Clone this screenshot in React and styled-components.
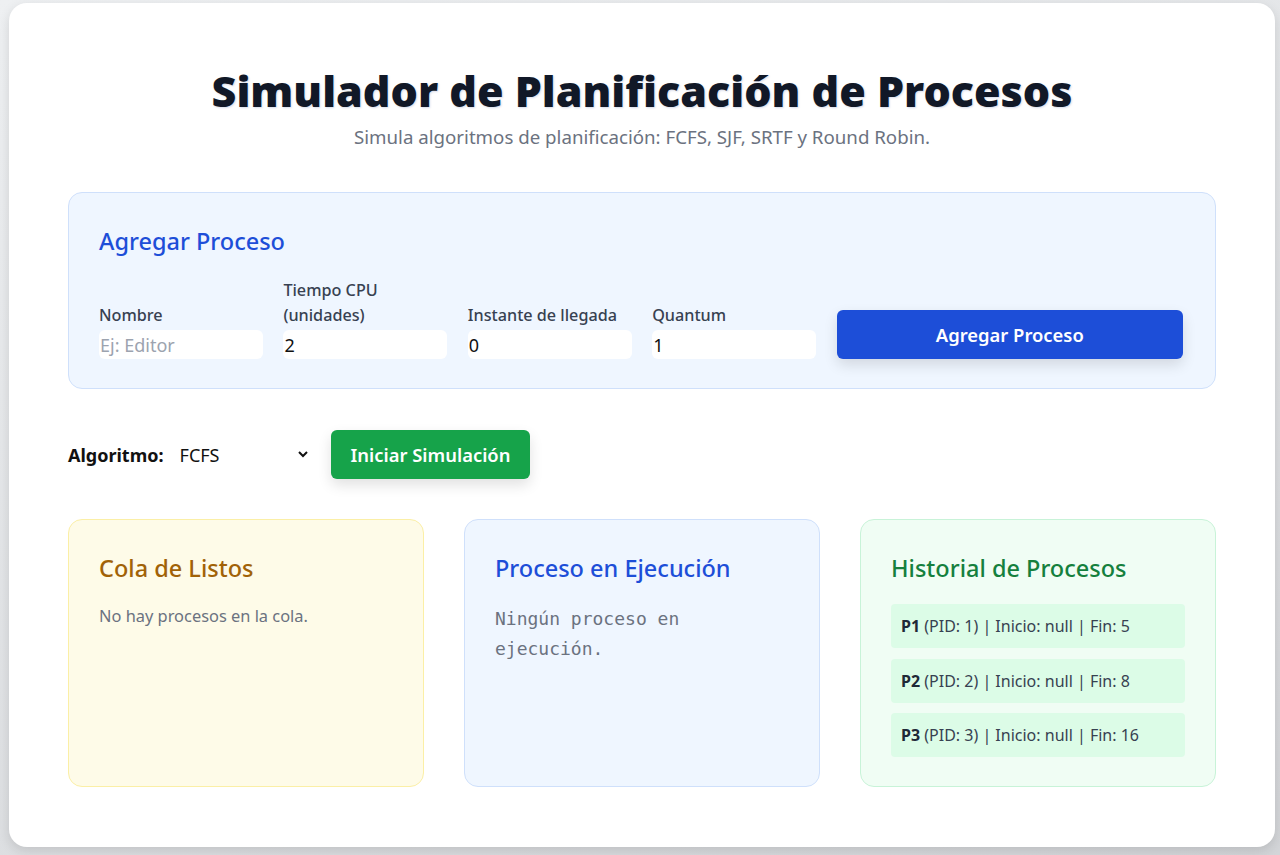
import React, { useState } from 'react';
import styled, { createGlobalStyle } from 'styled-components';

const GlobalStyle = createGlobalStyle`
  body {
    margin: 0;
    background: linear-gradient(160deg, #eef0f2 0%, #d3d5d8 100%);
    font-family: "Noto Sans", "Open Sans", "Liberation Sans", sans-serif;
    color: #111827;
  }
  * { box-sizing: border-box; }
`;

const tones = {
  blue: { bg: '#eff6ff', border: '#cfe0fb', title: '#1d4ed8' },
  yellow: { bg: '#fefbe8', border: '#fbefa6', title: '#a16207' },
  green: { bg: '#f0fdf4', border: '#c8f3d8', title: '#15803d' },
};

const Shell = styled.div`
  min-height: 855px;
  padding: 3px 5px 8px 9px;
`;

const Sheet = styled.main`
  background: #fff;
  border-radius: 18px;
  box-shadow: 0 4px 12px rgba(0, 0, 0, 0.12);
  padding: 62px 59px 60px;
`;

const Header = styled.header`
  text-align: center;
  margin-bottom: 43px;
`;

const Title = styled.h1`
  margin: 0;
  font-family: "Noto Sans", "Liberation Sans", sans-serif;
  font-weight: 900;
  font-size: 43px;
  line-height: 52px;
  color: #111827;
  text-shadow: 1px 1px 2px rgba(30, 58, 138, 0.18);
`;

const Subtitle = styled.p`
  margin: 8px 0 0;
  font-size: 18.7px;
  line-height: 24px;
  color: #6b7280;
`;

const Panel = styled.section`
  background: ${(p) => tones[p.$tone].bg};
  border: 1px solid ${(p) => tones[p.$tone].border};
  border-radius: 14px;
  padding: 32px 30px 29px;
  min-height: ${(p) => p.$minH || 'auto'};
`;

const PanelTitle = styled.h2`
  margin: 0 0 ${(p) => p.$gap || '20px'};
  font-size: 23.5px;
  font-weight: 500;
  line-height: 32px;
  color: ${(p) => tones[p.$tone].title};
`;

const FormGrid = styled.div`
  display: grid;
  grid-template-columns: repeat(4, 164px) 1fr;
  column-gap: 20.4px;
  align-items: end;
  margin-top: 21px;
`;

const Field = styled.label`
  display: flex;
  flex-direction: column;
  gap: 2px;
`;

const LabelText = styled.span`
  font-size: 16.2px;
  line-height: 25px;
  color: #374151;
  font-weight: 500;
`;

const Input = styled.input`
  height: 29px;
  width: 100%;
  border: none;
  border-radius: 6px;
  background: #fff;
  padding: 0 1px;
  font-family: "Noto Sans", "Liberation Sans", sans-serif;
  font-size: 18px;
  color: #111;
  outline: none;
  &::placeholder { color: #9ca3af; }
`;

const Button = styled.button`
  height: 49px;
  padding: 0 20px;
  border: none;
  border-radius: 6px;
  background: ${(p) => (p.$color === 'green' ? '#16a34a' : '#1d4ed8')};
  color: #fff;
  font-family: "Noto Sans", "Liberation Sans", sans-serif;
  font-size: 18.4px;
  font-weight: 600;
  cursor: pointer;
  box-shadow: 0 6px 14px rgba(0, 0, 0, 0.12);
  width: ${(p) => (p.$wide ? 'calc(100% - 2px)' : 'auto')};
`;

const Toolbar = styled.div`
  display: flex;
  align-items: center;
  gap: 20px;
  margin: 41px 0 40px;
`;

const AlgField = styled.label`
  display: flex;
  align-items: center;
  gap: 10px;
  font-size: 18px;
  font-weight: 700;
  color: #111;
`;

const Select = styled.select`
  width: 137px;
  height: 27px;
  border: none;
  border-radius: 6px;
  background: #fff;
  font-family: "Noto Sans", "Liberation Sans", sans-serif;
  font-size: 18px;
  color: #111;
  padding: 0 2px;
`;

const CardGrid = styled.div`
  display: grid;
  grid-template-columns: repeat(3, 1fr);
  gap: 40px;
`;

const Empty = styled.p`
  margin: 0;
  font-size: 16.4px;
  line-height: 24px;
  color: #6b7280;
`;

const MonoEmpty = styled.p`
  margin: 0;
  font-family: "DejaVu Sans Mono", "Liberation Mono", monospace;
  font-size: 18px;
  line-height: 30px;
  color: #6b7280;
`;

const HistoryList = styled.ul`
  list-style: none;
  margin: 0;
  padding: 0;
  display: flex;
  flex-direction: column;
  gap: 10.5px;
`;

const HistoryItem = styled.li`
  background: #dcfce7;
  border-radius: 4px;
  height: 44px;
  display: flex;
  align-items: center;
  padding: 0 10px;
  font-size: 16px;
  color: #374151;
  white-space: pre;
  b { color: #1f2937; font-weight: 700; }
`;

const history = [
  { name: 'P1', pid: 1, inicio: 'null', fin: 5 },
  { name: 'P2', pid: 2, inicio: 'null', fin: 8 },
  { name: 'P3', pid: 3, inicio: 'null', fin: 16 },
];

export default function App() {
  const [nombre, setNombre] = useState('');
  const [cpu, setCpu] = useState('2');
  const [llegada, setLlegada] = useState('0');
  const [quantum, setQuantum] = useState('1');
  const [alg, setAlg] = useState('FCFS');

  return (
    <Shell>
      <GlobalStyle />
      <Sheet>
        <Header>
          <Title>Simulador de Planificación de Procesos</Title>
          <Subtitle>Simula algoritmos de planificación: FCFS, SJF, SRTF y Round Robin.</Subtitle>
        </Header>

        <Panel $tone="blue">
          <PanelTitle $tone="blue" $gap="0">Agregar Proceso</PanelTitle>
          <FormGrid>
            <Field>
              <LabelText>Nombre</LabelText>
              <Input placeholder="Ej: Editor" value={nombre} onChange={(e) => setNombre(e.target.value)} />
            </Field>
            <Field>
              <LabelText>Tiempo CPU<br />(unidades)</LabelText>
              <Input type="number" value={cpu} onChange={(e) => setCpu(e.target.value)} />
            </Field>
            <Field>
              <LabelText>Instante de llegada</LabelText>
              <Input type="number" value={llegada} onChange={(e) => setLlegada(e.target.value)} />
            </Field>
            <Field>
              <LabelText>Quantum</LabelText>
              <Input type="number" value={quantum} onChange={(e) => setQuantum(e.target.value)} />
            </Field>
            <Button $wide>Agregar Proceso</Button>
          </FormGrid>
        </Panel>

        <Toolbar>
          <AlgField>
            Algoritmo:
            <Select value={alg} onChange={(e) => setAlg(e.target.value)}>
              <option>FCFS</option>
              <option>SJF</option>
              <option>SRTF</option>
              <option>Round Robin</option>
            </Select>
          </AlgField>
          <Button $color="green">Iniciar Simulación</Button>
        </Toolbar>

        <CardGrid>
          <Panel $tone="yellow" $minH="268px">
            <PanelTitle $tone="yellow">Cola de Listos</PanelTitle>
            <Empty>No hay procesos en la cola.</Empty>
          </Panel>
          <Panel $tone="blue" $minH="268px">
            <PanelTitle $tone="blue">Proceso en Ejecución</PanelTitle>
            <MonoEmpty>Ningún proceso en ejecución.</MonoEmpty>
          </Panel>
          <Panel $tone="green" $minH="268px">
            <PanelTitle $tone="green">Historial de Procesos</PanelTitle>
            <HistoryList>
              {history.map((h) => (
                <HistoryItem key={h.pid}>
                  <b>{h.name}</b>{` (PID: ${h.pid}) | Inicio: ${h.inicio} | Fin: ${h.fin}`}
                </HistoryItem>
              ))}
            </HistoryList>
          </Panel>
        </CardGrid>
      </Sheet>
    </Shell>
  );
}
